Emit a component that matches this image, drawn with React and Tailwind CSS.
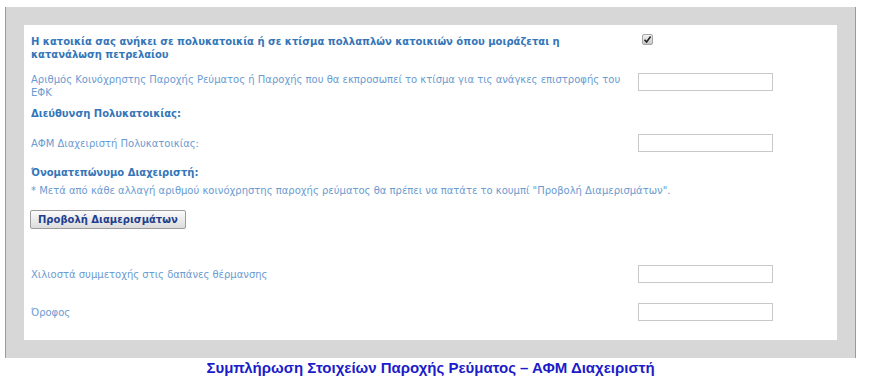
export default function App() {
  const font = { fontFamily: '"DejaVu Sans", Verdana, sans-serif' };
  const label = 'text-[10px] leading-[13px] text-[#6a9bd1]';
  const bold = 'text-[10px] leading-[13px] font-bold text-[#3576b8]';
  const box = 'h-[18px] w-[135px] border border-[#c9c9c9] bg-white';

  return (
    <div className="min-h-screen bg-white pt-[7px]">
      <div className="ml-[5px] w-[851px] border-l border-r border-[#9a9a9a] bg-[#d7d7d7] px-[18px] py-[18px]">
        <div className="bg-white px-[7px] pt-[10px] pb-[19px]" style={font}>
          <div className="flex items-start">
            <div className={`w-[607px] pr-[40px] ${bold}`}>
              Η κατοικία σας ανήκει σε πολυκατοικία ή σε κτίσμα πολλαπλών κατοικιών όπου μοιράζεται η κατανάλωση πετρελαίου
            </div>
            <span className="ml-[4px] -mt-[1px] flex h-[11px] w-[11px] items-center justify-center rounded-[2px] border border-[#a5a5a5] bg-gradient-to-b from-[#f2f2f2] to-[#c8c8c8]">
              <svg width="9" height="9" viewBox="0 0 9 9">
                <path d="M1.5 4.8 L3.6 7 L7.6 1.6" fill="none" stroke="#222" strokeWidth="1.6" />
              </svg>
            </span>
          </div>

          <div className="mt-[12px] flex items-start">
            <div className={`w-[607px] pr-[10px] ${label}`}>
              Αριθμός Κοινόχρηστης Παροχής Ρεύματος ή Παροχής που θα εκπροσωπεί το κτίσμα για τις ανάγκες επιστροφής του ΕΦΚ
            </div>
            <div className={box} />
          </div>

          <div className={`mt-[8px] ${bold}`}>Διεύθυνση Πολυκατοικίας:</div>

          <div className="mt-[14px] flex items-center">
            <div className={`w-[607px] ${label}`}>ΑΦΜ Διαχειριστή Πολυκατοικίας:</div>
            <div className={box} />
          </div>

          <div className={`mt-[14px] ${bold}`}>Όνοματεπώνυμο Διαχειριστή:</div>

          <div className={`mt-[5px] ${label}`}>
            * Μετά από κάθε αλλαγή αριθμού κοινόχρηστης παροχής ρεύματος θα πρέπει να πατάτε το κουμπί "Προβολή Διαμερισμάτων".
          </div>

          <button className="-ml-[1px] mt-[13px] h-[19px] rounded-[2px] border border-[#9c9c9c] bg-gradient-to-b from-[#fbfbfb] to-[#dcdcdc] px-[7px] text-[10px] font-bold leading-[17px] text-[#1f3f8f]">
            Προβολή Διαμερισμάτων
          </button>

          <div className="mt-[35px] flex items-center">
            <div className={`w-[607px] ${label}`}>Χιλιοστά συμμετοχής στις δαπάνες θέρμανσης</div>
            <div className={box} />
          </div>

          <div className="mt-[20px] flex items-center">
            <div className={`w-[607px] ${label}`}>Όροφος</div>
            <div className={box} />
          </div>
        </div>
      </div>
      <div
        className="w-[861px] pt-[1px] text-center text-[15px] font-bold leading-[18px] text-[#1c1cc8]"
        style={{ fontFamily: '"Liberation Sans", Arial, sans-serif' }}
      >
        Συμπλήρωση Στοιχείων Παροχής Ρεύματος – ΑΦΜ Διαχειριστή
      </div>
    </div>
  );
}
